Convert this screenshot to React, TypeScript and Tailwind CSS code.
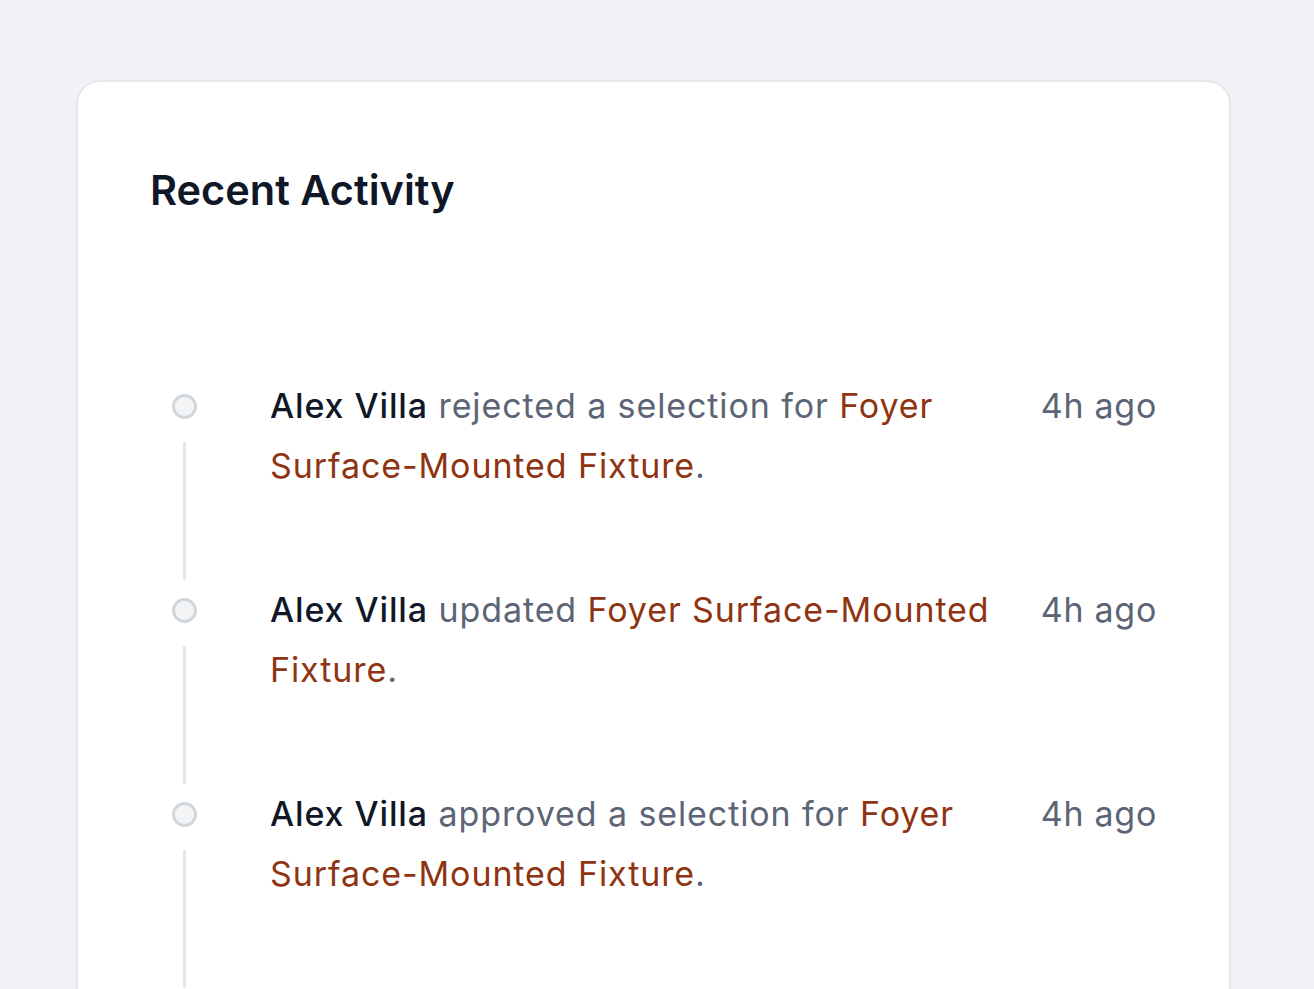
import React from 'react';

type Activity = {
  id: number;
  name: string;
  action: string;
  target: string;
  time: string;
};

const ACTIVITIES: Activity[] = [
  { id: 1, name: 'Alex Villa', action: 'rejected a selection for', target: 'Foyer Surface-Mounted Fixture', time: '4h ago' },
  { id: 2, name: 'Alex Villa', action: 'updated', target: 'Foyer Surface-Mounted Fixture', time: '4h ago' },
  { id: 3, name: 'Alex Villa', action: 'approved a selection for', target: 'Foyer Surface-Mounted Fixture', time: '4h ago' },
];

const ActivityRow: React.FC<{ item: Activity }> = ({ item }) => (
  <li className="flex">
    {/* Timeline dot + connector */}
    <div className="ml-[22px] flex w-[25px] shrink-0 flex-col items-center">
      <span className="mt-[18px] h-[25px] w-[25px] rounded-full border-[3px] border-gray-300 bg-gray-100" />
      <span className="mt-[23px] w-[3px] flex-1 bg-gray-200" />
    </div>

    <p className="ml-[73px] flex-1 pb-[84px] text-[34px] leading-[60px] tracking-[0.9px] text-[#5c6576]">
      <span className="font-medium text-gray-900">{item.name}</span> {item.action}{' '}
      <span className="text-[#8f3412]">{item.target}</span>.
    </p>

    <span className="ml-[32px] shrink-0 whitespace-nowrap text-[34px] leading-[60px] tracking-[0.7px] text-[#5c6576]">
      {item.time}
    </span>
  </li>
);

export default function App() {
  return (
    <div
      className="min-h-screen overflow-hidden bg-[#f1f2f6] pl-[76px] pr-[83px] pt-[80px]"
      style={{ fontFamily: 'Inter, "Noto Sans", sans-serif' }}
    >
      <div className="min-h-[1100px] rounded-3xl border-2 border-gray-200 bg-white px-[72px] pt-[80px]">
        <h2 className="text-[41.5px] font-semibold leading-[56px] text-gray-900">Recent Activity</h2>

        <ul className="mt-[158px]">
          {ACTIVITIES.map(item => (
            <ActivityRow key={item.id} item={item} />
          ))}
        </ul>
      </div>
    </div>
  );
}
